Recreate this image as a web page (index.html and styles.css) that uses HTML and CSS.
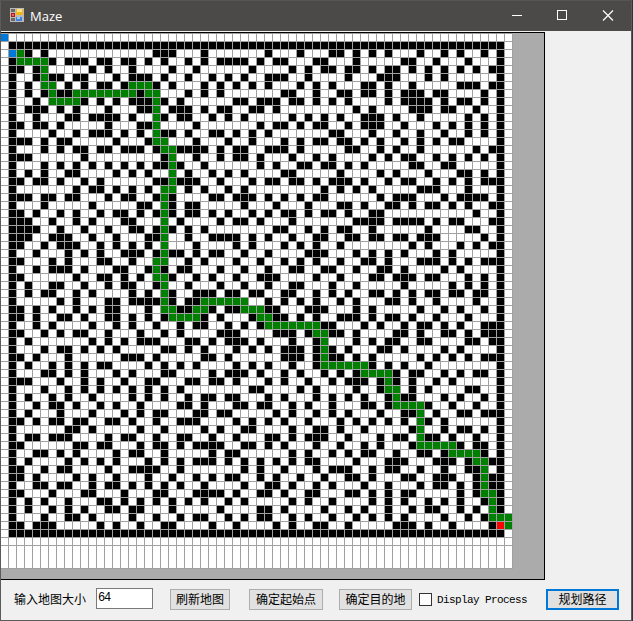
FILE: index.html
```html
<!DOCTYPE html>
<html lang="zh">
<head>
<meta charset="utf-8">
<title>Maze</title>
<link rel="stylesheet" href="styles.css">
</head>
<body>
<div class="window">
  <header class="titlebar">
    <svg class="app-icon" width="14" height="14" viewBox="0 0 14 14" shape-rendering="crispEdges">
      <rect width="14" height="14" fill="#b9b9b9"/>
      <rect x="1" y="1" width="4" height="3" fill="#6b6966"/>
      <rect x="6" y="1" width="7" height="6" fill="#f0b41c"/>
      <rect x="7" y="1" width="5" height="3" fill="#ffe08a"/>
      <rect x="1" y="5" width="4" height="4" fill="#b51a14"/>
      <rect x="2" y="6" width="2" height="2" fill="#e8685c"/>
      <rect x="6" y="9" width="6" height="4" fill="#3f83dc"/>
      <rect x="7" y="9" width="3" height="2" fill="#9cc8fa"/>
      <rect x="1" y="10" width="4" height="3" fill="#6b6966"/>
    </svg>
    <span class="title">Maze</span>
    <svg class="controls" width="120" height="30" viewBox="0 0 120 30" fill="none" stroke="#fff">
      <path d="M1 14.500h10M46.500 9.500h9v9h-9z" shape-rendering="crispEdges"/>
      <path d="M92 9.500l10 10M102 9.500l-10 10" stroke-width="1.200"/>
    </svg>
  </header>
  <main class="client">
    <div class="board"><div class="grid" id="grid"></div></div>
    <div class="toolbar">
      <label class="caption" for="size">输入地图大小</label>
      <input class="size" id="size" value="64">
      <button class="btn refresh">刷新地图</button>
      <button class="btn start">确定起始点</button>
      <button class="btn target">确定目的地</button>
      <label class="check"><span class="box"></span>Display Process</label>
      <button class="btn plan">规划路径</button>
    </div>
  </main>
</div>
<script src="maze.js"></script>
</body>
</html>
```
FILE: styles.css
```css
* { box-sizing: border-box; }
body {
  margin: 0;
  background: #293541;
  font: 12px/14px "Liberation Mono", "Noto Sans CJK SC", monospace;
  color: #000;
}
.window {
  width: 632px;
  height: 621px;
  display: flex;
  flex-direction: column;
  border: 1px solid #5b5b5b;
  border-top-color: #575553;
  background: #f0f0f0;
  overflow: hidden;
}
.titlebar {
  height: 30px;
  flex: none;
  display: flex;
  align-items: center;
  padding-left: 9px;
  background: #4c4a48;
}
.app-icon { margin-top: -2px; }
.title {
  margin-left: 6px;
  color: #fff;
  font: 13px/16px "Open Sans", sans-serif;
}
.controls { margin-left: auto; }
.client { flex: 1; padding-top: 1px; }
.board {
  width: 544px;
  height: 548px;
  border: 1px solid #000;
  border-left: 0;
  background: #ababab;
}
.grid {
  display: grid;
  width: 512px;
  grid-template-columns: repeat(64, 8px);
  grid-template-rows: repeat(64, 8px) 23px;
  border-top: 1px solid #a0a0a0;
  box-sizing: content-box;
}
.cell {
  background: #fff;
  border: solid #a0a0a0;
  border-width: 0 1px 1px 0;
}
.wall { background: #000; }
.path { background: #008000; }
.origin { background: #0078d7; }
.goal { background: #f00; }
.toolbar {
  display: flex;
  align-items: flex-start;
  height: 40px;
  padding-top: 9px;
}
.caption {
  width: 82px;
  margin-left: 13px;
  padding-top: 5px;
  white-space: nowrap;
}
.size {
  width: 57px;
  height: 21px;
  margin-top: -1px;
  padding: 0 1px 2px;
  border: 1px solid #7a7a7a;
  border-radius: 0;
  background: #fff;
  font: 12px/14px "Liberation Mono", monospace;
  letter-spacing: -1.2px;
  color: #000;
}
.btn {
  height: 21px;
  margin: 0 0 0 17px;
  padding: 2px 0 0;
  border: 1px solid #adadad;
  border-radius: 0;
  background: #e1e1e1;
  font: inherit;
  color: #000;
  white-space: nowrap;
}
.refresh { width: 60px; }
.start { width: 74px; margin-left: 19px; }
.target { width: 73px; margin-left: 16px; }
.check {
  display: flex;
  align-items: center;
  width: 110px;
  height: 21px;
  margin-left: 7px;
  font-size: 11px;
  letter-spacing: -0.6px;
  white-space: nowrap;
}
.box {
  width: 13px;
  height: 13px;
  margin-right: 5px;
  border: 1px solid #333;
  background: #fff;
}
.plan { width: 73px; margin-left: 17px; border: 2px solid #0078d7; }
```
FILE: maze.js
```js
// Each row: "walls of columns 0-31 | walls of columns 32-63 (counted from 0)".
const walls = `
|
1-31|0-30
3,5,19-21,25|1,5,9,10,12,14,16,20,23,25,28,30
1,6,8-10,12,13,15,16,18,20,23,25,27-30|0,2,3,7,8,12,18,19,22,26,30
1,2,4,11,13,16,21,24,31|4,6,8,9,11,12,14,16,17,19,21,23,25,27,29,30
1,4,6,7,9,10,14,16-18,20,23,26,28,30|1-3,6,11,15-17,21,23,30
1,3,8,10,12,13,15,19,21,25,27,29,31|1,5,7,9,13,14,16,19,25-27,29,30
1,3,5,7,8,17,19,23,25,27|3,4,7,10,11,13,14,16,18-20,22,23,28,30
1,4,10,12,14,16-18,20,22,29,30|0-2,4,5,7,9,11,16,18-21,23,25,26,28,30
1,3-5,7,9,13,17,18,21-23,25,27,28,31|0,2,12,14,19-21,23,24,27,30
1,4,8,9,11-14,16,20,22,23,26,28,30|4,6,8,10,13-15,17,20,26,28,30
1,2,4,5,7,13,17,18,24|0,2,3,5,7,8,11,13-15,18,22,24,26,28,30
1,6,9,11-13,15,17,20,21,23,26,27,29,31|1,9,10,14,17,20,23,26,28,30
1-3,5,7,8,14,18,24,28,31|3,5,7,8,10,11,13,15,18,20,22,24,25,30
1,5,7,9,10,12,13,15-17,19,22-25,27,29,30|1-3,5,11,12,15,17,20,27,29,30
1-3,10,20,24,27,29,30|0,4,7,9,14,16,18,19,22,24,26,28,30
1,5,7,9,11,13,15,17,19,20,22,25|0,2,5,6,8,9,11,13,19,20,23,24,30
1,3,5,8,9,14,16,18,23,26,28,30|3,4,10,15,17,21,25,26,28,30
1,2,4,5,7,10,12,19,20,22-24,27,31|1,2,4,5,7,9-11,13,16,18,19,22,24,26,28-30
1,9,11,12,14,16,18,23,25,28,30|8,10,12,14,20-22,26,30
1-3,5,6,8,9,13,15,16,19,21,26,27,29-31|1,3,5,7,8,15,17-19,23,25-28,30
1,5,11,17,18,21,23,24,30|2,6,10,11,13,16,17,19,21,22,24,26,29,30
1,2,4,7,9,12,14,15,17,19,21,23,24,26,28,31|1,3,4,6,8,9,11,14,15,27,30
1-3,6,9,11,15,16,22,27,29,30|0,4,12-15,17-20,22,24,25,29,30
1-4,7,10,13,16,17,19,21,23,25|2,3,6,8,10,11,14,21,26,27,30
1-3,6-8,11,14,18,19,23,26-29,31|1,4,7,8,11,12,14,15,17,18,20-22,28,30
1,2,5,7-9,12,14,16,18,24,29,31|3,5,7,10,19,21,25,27,29,30
1,4,8,10,12,15-17,19,21,22,24,26,27,30|1,6-8,12,14,16,18,22,24,30
1,2,6,8,12,13,16,23,25,29|0,3,5,7,10,13,14,16,20-22,24,26,28-30
1,4,6-8,10,14,15,18,20,22,23,27,30|1,4,5,8,9,12,15,16,18,23,25,30
1,2,9,12,13,15,17,21,24,26,29|0-2,7,10,14,15,17-19,21,22,26,28,30
1,3,6,7,10,13,15,16,19,23,27,30|1,4,5,9,12,18,24,26,28,30
1,3,5,6,9,11,16,18,21,24-26,28,29,31|0,3,4,7,9,11,14,15,17,19,21,22,24,25,27,28,30
1,7,9,13,14,16-19,21,23,24|1,3,5,7,10,12,16,17,19,22,27,30
1,2,4,6,9,11,13,14,18,22,23,26,28,29|1,2,6-8,12,14,20,23,25,28,30
1,2,4,7,8,10,13,14,16,18,20,25,27,31|2,3,5,7,10-12,14,16,17,19,22,26,30
1,4,6,11,14,16,19,22,24,25,28,30|0,8,9,13,15,18,20,21,23,25,28-30
1,2,5,7,9,10,13,17,20,22,27-29|2-4,6,9,10,12,17,18,20,23,24,26,28-30
1,3,11,13,15,17-19,23,24,26,28-30|0,4,7,12,14,16,17,20,21,26,27,29,30
1,5,7,8,10,12,14,20,21,23,25,29,31|1,3-5,7,9,11,15,16,18,23,25,30
1,2,4,8,15-17,19,25,26,28|3-5,7,9,10,12,14,20,22,24,26,28-30
1,3,6,8,10,12,13,18,20,22,24,29,31|1,4,7,14,16,18,21,30
1,5,6,8,10,14,16,20,21,26,28-30|0,3,5,8,10,12,17,19,20,23,25,27,28,30
1-3,7,10,12,15,18,19,23,24,26,27,29|1,3,6,9,11-13,15,17,19,22,24,30
1,5,8,10,12,14,16,18,20,22,31|0,5,7,12,15,19,21,26,27,30
1,3,6,8,11,16,18,20,23,25,26,28,29|1,3,7,9,11,13,16,18,19,23,25,28,30
1,4,6,7,9,12,14,17,22,23,25,29,30|0,1,4,6,9,13,14,16,21,24,27,30
1,3,7,11,15,17,19,20,24,25,27,28|2,4,7,9,11,15,18,19,22,25,26,28-30
1,2,4,6,7,9,10,13,14,16,19,22-24,29,31|1,3,6,10,12,14,16,18,21,23,30
1,8,9,11,17,20,25,27,30,31|4,7,8,10,13,19,23,25,26,28,30
1,3,4,6-8,13,15,16,19,22,23,26,29|1,2,4,6-8,11,15,17,18,21,22,24,27,30
1,2,9,10,12,13,17,19,20,22,24-27,30,31|1,3,7,10,13,15,19,25,27,28,30
1,4,5,7,9,14,16,17,20,26,28,29|4,6,9,11,13,14,17,20,21,23,28,30
1,3,8,10,12,14,18,20,22,24-26,28,30|0,2,4,6,7,12,16-18,22-24,26,29,30
1,2,5,7,8,13,16-19,22,30|0,3,7,9-11,14,16,17,20,23,26,27,30
1,2,4,9,11,14,18,21,24,26,28,29|0,2,5,8,11,12,14,18,19,22-24,27,29,30
1,4,5,7,8,11,13,14,16,18,20,22,25,30|1,2,4,7,9,13,16,20,22,23,25,27,29,30
1,2,6,10,11,15,19,20,24-27,29|0,1,3,6,7,11,12,14,16,18,19,25,27,30
1,3,5,8,12,13,15,17,19,21,23,25,28,30|4,6,9,14,16,18,21,23,25,28,30
1,3,6,8,10,13,14,16,17,21,27|0,1,3,8,11,13,16,19,21,22,25,27,30
1,5,8,9,11,16,19,22,24,25,28,30|0,1,4,6,9,12,14,16,18,23,26,28
1,2,4-6,12,14,17,20,21,26,29|2,4,7,8,11,17-19,21,24,29
1-31|0-30
|
|`.trim().split("\n");

// Route cells as row:columns.
const route = `2:2 3:2-5 4:5 5:5 6:5-6,16-18 7:6,9-16,18-19 8:6-9,19 9:19 10:19 11:19 12:19
13:19-20 14:20-21 15:21 16:21 17:21 18:21 19:20-21 20:20 21:20 22:20 23:20 24:20 25:20
26:20 27:20 28:19-20 29:19 30:19-20 31:20 32:20 33:20,25-30 34:20-21,24-25,30-32
35:21-24,32-33 36:33-39 37:39-40 38:40 39:40 40:40 41:40-45 42:45-48 43:48 44:48-49
45:49 46:49-52 47:52 48:52 49:52 50:52 51:52-56 52:56-59 53:59-60 54:60 55:60 56:60
57:60-61 58:61 59:61 60:61-63 61:63`.split(/\s+/);

const expand = (text) => text.split(",").filter(Boolean).flatMap((run) => {
  const [from, to = from] = run.split("-").map(Number);
  return Array.from({ length: to - from + 1 }, (_, i) => from + i);
});

const kinds = Array.from({ length: 65 }, () => Array(64).fill(""));
walls.forEach((line, row) => {
  line.split("|").forEach((half, side) => {
    expand(half).forEach((col) => { kinds[row][col + side * 32] = "wall"; });
  });
});
route.forEach((entry) => {
  const [row, cols] = entry.split(":");
  expand(cols).forEach((col) => { kinds[row][col] = "path"; });
});
kinds[0][0] = "origin";
kinds[2][1] = "origin";
kinds[61][62] = "goal";

const grid = document.getElementById("grid");
kinds.flat().forEach((kind) => {
  const cell = document.createElement("div");
  cell.className = kind ? "cell " + kind : "cell";
  grid.append(cell);
});
```
